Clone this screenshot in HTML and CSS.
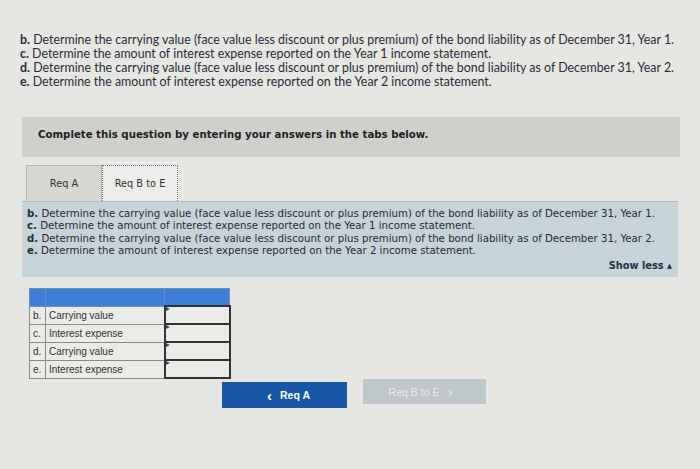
FILE: index.html
```html
<!DOCTYPE html>
<html>
<head>
<meta charset="utf-8">
<link rel="stylesheet" href="styles.css">
</head>
<body>
<div class="page">
  <div class="intro">
    <div><b>b.</b> Determine the carrying value (face value less discount or plus premium) of the bond liability as of December 31, Year 1.</div>
    <div><b>c.</b> Determine the amount of interest expense reported on the Year 1 income statement.</div>
    <div><b>d.</b> Determine the carrying value (face value less discount or plus premium) of the bond liability as of December 31, Year 2.</div>
    <div><b>e.</b> Determine the amount of interest expense reported on the Year 2 income statement.</div>
  </div>
  <div class="prompt">Complete this question by entering your answers in the tabs below.</div>
  <div class="tabs">
    <div class="tab">Req A</div>
    <div class="tab active">Req B to E</div>
  </div>
  <div class="panel">
    <div><b>b.</b> Determine the carrying value (face value less discount or plus premium) of the bond liability as of December 31, Year 1.</div>
    <div><b>c.</b> Determine the amount of interest expense reported on the Year 1 income statement.</div>
    <div><b>d.</b> Determine the carrying value (face value less discount or plus premium) of the bond liability as of December 31, Year 2.</div>
    <div><b>e.</b> Determine the amount of interest expense reported on the Year 2 income statement.</div>
    <div class="show-less">Show less <span class="tri">▲</span></div>
  </div>
  <table class="answers">
    <colgroup><col class="c-let"><col class="c-lab"><col class="c-inp"></colgroup>
    <tr class="head"><td class="let"></td><td class="lab"></td><td class="inp"></td></tr>
    <tr><td class="let">b.</td><td class="lab">Carrying value</td><td class="inp"><span class="mark"></span></td></tr>
    <tr><td class="let">c.</td><td class="lab">Interest expense</td><td class="inp"><span class="mark"></span></td></tr>
    <tr><td class="let">d.</td><td class="lab">Carrying value</td><td class="inp"><span class="mark"></span></td></tr>
    <tr><td class="let">e.</td><td class="lab">Interest expense</td><td class="inp"><span class="mark"></span></td></tr>
  </table>
  <div class="nav">
    <div class="btn prev"><span class="chev">&lsaquo;</span> Req A</div>
    <div class="btn next">Req B to E <span class="chev">&rsaquo;</span></div>
  </div>
</div>
</body>
</html>
```

FILE: styles.css
```css
html, body {
  margin: 0;
  padding: 0;
}
body {
  background: #e6e6e2;
  width: 700px;
  height: 469px;
  overflow: hidden;
}
.page {
  padding-top: 33px;
}
.intro {
  padding-left: 20px;
  font-family: Lato, "Liberation Sans", sans-serif;
  font-size: 12.4px;
  line-height: 14px;
  color: #2c2c38;
}
.intro b {
  font-weight: 700;
}
.prompt {
  margin: 28px 20px 0 22px;
  height: 40px;
  box-sizing: border-box;
  background: #cfd0cc;
  padding: 12px 0 0 16px;
  font-family: "DejaVu Sans", sans-serif;
  font-weight: bold;
  font-size: 10.2px;
  color: #1e1e1e;
}
.tabs {
  display: flex;
  margin: 8px 0 0 26px;
  height: 36px;
}
.tab {
  width: 76px;
  box-sizing: border-box;
  background: #d6d6d2;
  border: 1px solid #b8b8b4;
  border-bottom: none;
  font-family: "DejaVu Sans", sans-serif;
  font-size: 9.8px;
  color: #333;
  display: flex;
  align-items: center;
  justify-content: center;
}
.tab.active {
  background: #ececea;
  border: 1px dotted #777;
  border-bottom: none;
}
.panel {
  margin: 0 22px 0 22px;
  height: 76px;
  box-sizing: border-box;
  background: #c6d3d9;
  border-top: 1px solid #b0bcc2;
  padding: 6px 6px 0 5px;
  font-family: "DejaVu Sans", sans-serif;
  font-size: 10.2px;
  line-height: 12.3px;
  color: #2a2a30;
}
.show-less {
  text-align: right;
  font-weight: bold;
  font-size: 9.8px;
  color: #1f3148;
  margin-top: 3px;
}
.tri {
  font-size: 6.5px;
  vertical-align: 1px;
}
.answers {
  margin: 11px 0 0 29px;
  border-collapse: collapse;
  table-layout: fixed;
  width: 200px;
  font-family: "Liberation Sans", Arial, sans-serif;
  font-size: 10px;
  color: #333;
}
.c-let { width: 16px; }
.c-lab { width: 119px; }
.c-inp { width: 65px; }
.answers td {
  border: 1px solid #8a8a88;
  height: 16px;
  padding: 0 0 0 3px;
  background: #ebebe7;
}
.answers .head td {
  background: #3d7fd6;
  height: 16px;
  border-color: #6a8fbf;
}
.answers .inp {
  border: 2px solid #333;
  position: relative;
}
.answers .head .inp {
  border: 1px solid #6a8fbf;
}
.mark {
  position: absolute;
  left: 0;
  top: 0;
  width: 0;
  height: 0;
  border-left: 4px solid #2a4a7a;
  border-top: 2px solid transparent;
  border-bottom: 2px solid transparent;
}
.nav {
  display: flex;
  justify-content: center;
  gap: 16px;
  margin-top: 3px;
  padding-left: 8px;
  align-items: flex-start;
}
.btn {
  width: 125px;
  height: 26px;
  display: flex;
  align-items: center;
  justify-content: center;
  font-family: "Liberation Sans", Arial, sans-serif;
  font-weight: bold;
  font-size: 10.5px;
}
.btn.prev {
  background: #1856a8;
  color: #fff;
}
.btn.next {
  background: #bfc7cb;
  color: #e4e8ea;
  width: 123px;
  height: 25px;
  margin-top: -3px;
  font-weight: normal;
}
.chev {
  font-size: 15px;
  margin: 0 8px;
  line-height: 1;
}
```
